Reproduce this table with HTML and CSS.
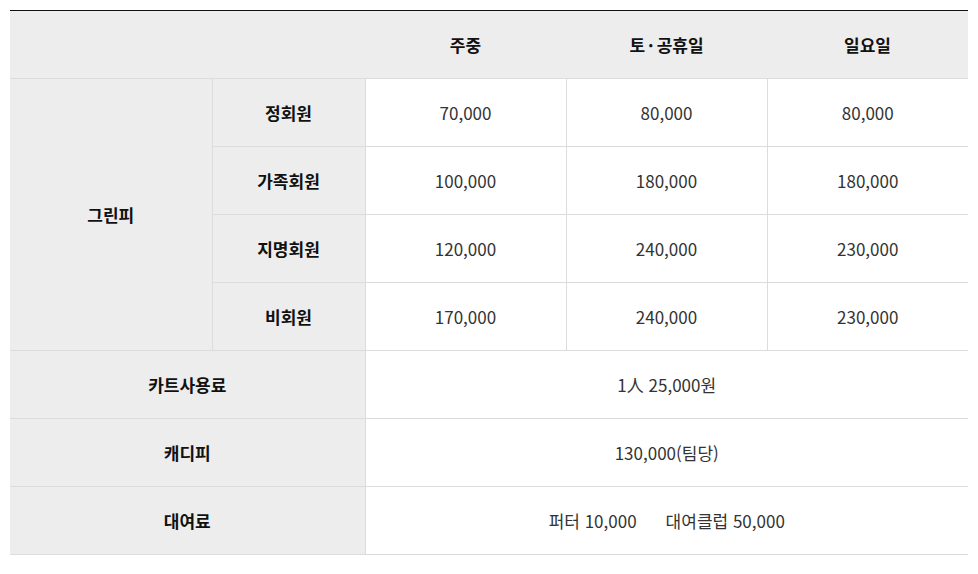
FILE: index.html
```html
<!DOCTYPE html>
<html lang="ko">
<head>
<meta charset="utf-8">
<link rel="stylesheet" href="styles.css">
</head>
<body>
<div class="wrap">
<table class="fee">
  <colgroup>
    <col class="c1"><col class="c2"><col class="c3"><col class="c3"><col class="c3">
  </colgroup>
  <thead>
    <tr>
      <th colspan="2"></th>
      <th>주중</th>
      <th>토<span class="dot">·</span>공휴일</th>
      <th>일요일</th>
    </tr>
  </thead>
  <tbody>
    <tr>
      <th rowspan="4">그린피</th>
      <th>정회원</th>
      <td>70,000</td><td>80,000</td><td>80,000</td>
    </tr>
    <tr>
      <th>가족회원</th>
      <td>100,000</td><td>180,000</td><td>180,000</td>
    </tr>
    <tr>
      <th>지명회원</th>
      <td>120,000</td><td>240,000</td><td>230,000</td>
    </tr>
    <tr>
      <th>비회원</th>
      <td>170,000</td><td>240,000</td><td>230,000</td>
    </tr>
    <tr>
      <th colspan="2">카트사용료</th>
      <td colspan="3">1人 25,000원</td>
    </tr>
    <tr>
      <th colspan="2">캐디피</th>
      <td colspan="3">130,000(팀당)</td>
    </tr>
    <tr>
      <th colspan="2">대여료</th>
      <td colspan="3">퍼터 10,000<span class="gap"></span>대여클럽 50,000</td>
    </tr>
  </tbody>
</table>
</div>
</body>
</html>
```
FILE: styles.css
```css
html, body {
  margin: 0;
  padding: 0;
  background: #fff;
}
.wrap {
  padding: 10px;
}
.fee {
  width: 958px;
  border-collapse: collapse;
  table-layout: fixed;
  font-family: "Noto Sans CJK KR", "Noto Sans", sans-serif;
  font-size: 17px;
  color: #333;
  border-top: 1px solid #111;
}
.c1 { width: 202px; }
.c2 { width: 153px; }
.c3 { width: 201px; }
.fee th, .fee td {
  height: 67px;
  padding: 0;
  text-align: center;
  vertical-align: middle;
  border: 1px solid #dcdcdc;
  line-height: 24px;
}
.fee th {
  background: #ededed;
  color: #111;
  font-weight: 700;
}
.fee thead th {
  border-left: none;
  border-right: none;
  border-top: 1px solid #111;
}
.fee tr > :first-child {
  border-left: none;
}
.fee tr > :last-child {
  border-right: none;
}
.fee tbody tr:first-child > th:first-child {
  border-right: 1px solid #dcdcdc;
}
.fee td {
  background: #fff;
}
.dot {
  margin: 0 3px;
}
.gap {
  display: inline-block;
  width: 29px;
}
```
